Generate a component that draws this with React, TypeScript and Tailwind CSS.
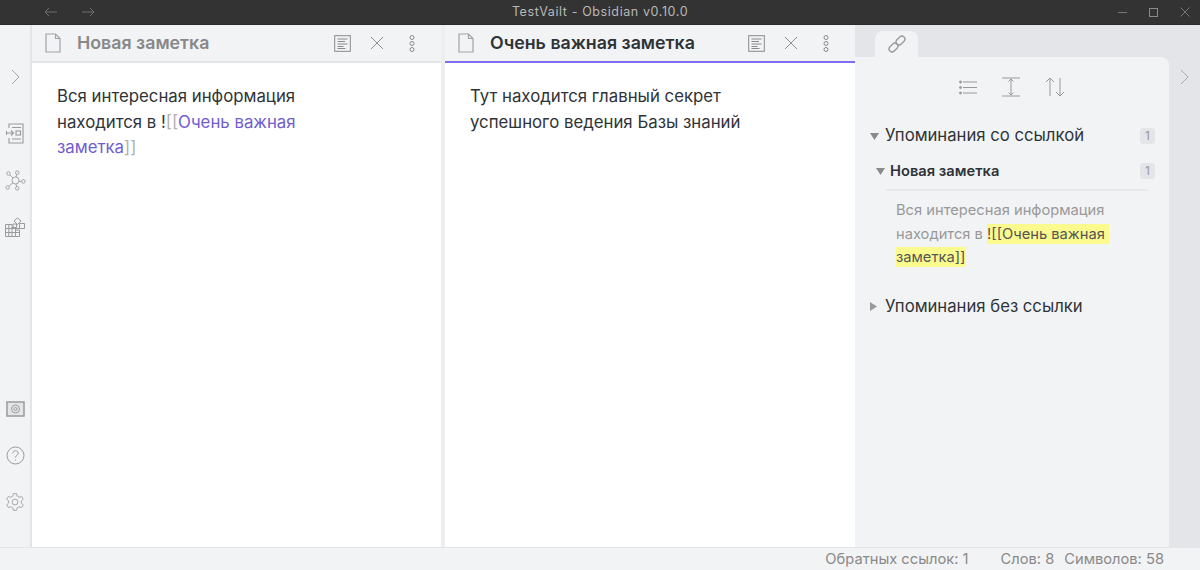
import type { ReactNode } from 'react'

const font = { fontFamily: 'Inter, "Noto Sans", sans-serif' }

function Svg({ size, children, className }: { size: number; children: ReactNode; className?: string }) {
  return (
    <svg width={size} height={size} viewBox="0 0 24 24" fill="none" stroke="currentColor" strokeWidth="1" className={className}>
      {children}
    </svg>
  )
}

function PageIcon() {
  return (
    <svg width="16" height="20" viewBox="0 0 16 20" fill="none" stroke="#a3a3a3" strokeWidth="1.2">
      <path d="M1 1h9.5L15 5.5V19H1z" />
      <path d="M10.5 1v4.5H15" />
    </svg>
  )
}

function PreviewIcon() {
  return (
    <svg width="17" height="17" viewBox="0 0 17 17" fill="none" stroke="#8a8a8a" strokeWidth="1">
      <rect x="0.7" y="0.7" width="15.6" height="15.6" />
      <path d="M3.5 4h10M3.5 6.5h7.5M3.5 9h10M3.5 11.5h6M3.5 13.5h8" />
    </svg>
  )
}

function CloseIcon() {
  return (
    <svg width="14" height="14" viewBox="0 0 14 14" stroke="#909090" strokeWidth="1">
      <path d="M1 1l12 12M13 1L1 13" />
    </svg>
  )
}

function MoreIcon() {
  return (
    <svg width="6" height="17" viewBox="0 0 6 17" fill="none" stroke="#8a8a8a" strokeWidth="1">
      <circle cx="3" cy="2.5" r="2" />
      <circle cx="3" cy="8.5" r="2" />
      <circle cx="3" cy="14.5" r="2" />
    </svg>
  )
}

function Chevron() {
  return (
    <svg width="9" height="16" viewBox="0 0 9 16" fill="none" stroke="#a8a8a8" strokeWidth="1">
      <path d="M1 1l7 7-7 7" />
    </svg>
  )
}

function PaneHeader({ title, active }: { title: string; active?: boolean }) {
  return (
    <div
      className={`flex h-[38px] shrink-0 items-center border-b-2 bg-[#f2f3f5] pl-[13px] ${
        active ? 'border-[#7f6df2]' : 'border-[#e3e5e8]'
      }`}
    >
      <PageIcon />
      <span
        className={`ml-[16px] flex-1 text-[17.800px] font-semibold ${active ? 'text-[#2e3338]' : 'text-[#888888]'}`}
      >
        {title}
      </span>
      <div className="flex items-center">
        <PreviewIcon />
        <div className="ml-[19px]">
          <CloseIcon />
        </div>
        <div className="mr-[26px] ml-[25px]">
          <MoreIcon />
        </div>
      </div>
    </div>
  )
}

function Badge() {
  return (
    <span className="flex h-[16px] w-[15px] items-center justify-center rounded-[3px] bg-[#e3e5e8] text-[12px] text-[#999999]">
      1
    </span>
  )
}

function Caret({ open }: { open?: boolean }) {
  return open ? (
    <svg width="9" height="7" viewBox="0 0 9 7" fill="#8a8a8a">
      <path d="M0 0h9L4.5 7z" />
    </svg>
  ) : (
    <svg width="7" height="9" viewBox="0 0 7 9" fill="#9a9a9a">
      <path d="M0 0l7 4.5L0 9z" />
    </svg>
  )
}

function Ribbon() {
  return (
    <div className="flex w-[32px] shrink-0 flex-col items-center border-r-2 border-[#e3e5e8] bg-[#f2f3f5] pt-[44px] pb-[35px] text-[#9a9a9a]">
      <Chevron />
      <div className="mt-[38px] flex flex-col items-center gap-[26px]">
        <svg width="18" height="21" viewBox="0 0 18 21" fill="none" stroke="currentColor" strokeWidth="1.100">
          <path d="M3 5V1h14v19H3v-5" />
          <path d="M0.500 10h7M5 7.500L7.500 10 5 12.500M0.500 8v4" />
          <rect x="10" y="8" width="4.500" height="4" />
          <path d="M6 4.500h9M6 16h9" />
        </svg>
        <Svg size={21}>
          <circle cx="12" cy="12" r="4" />
          <circle cx="4" cy="4" r="2" />
          <circle cx="14" cy="3" r="2" />
          <circle cx="3" cy="20" r="2" />
          <circle cx="14" cy="21" r="2" />
          <circle cx="21" cy="13" r="2" />
          <path d="M5.500 5.500l3.500 3.500M13.500 5l-1 3M4.500 18.500l4.500-4M13.500 19l-1-3M19 13h-3" />
        </Svg>
        <svg width="20" height="20" viewBox="0 0 20 20" fill="none" stroke="currentColor" strokeWidth="1">
          <path d="M0.500 7.500H7V19.500H0.500zM7 10.500h3.500V19.500H7M10.500 13h4v6.500h-4" />
          <path d="M0.500 11.500h14M0.500 15.500h14" />
          <path d="M3.800 7.500v12" />
          <path d="M9 4L12.500 0.800 16 4l-3.500 3.500zM14.500 6.500h5v5h-5zM8 7h3.500v3.500H8z" />
        </svg>
      </div>
      <div className="mt-auto flex flex-col items-center gap-[27.500px]">
        <svg width="19" height="17" viewBox="0 0 19 17" fill="#e3e5e8" stroke="currentColor" strokeWidth="1.500">
          <rect x="1" y="1" width="17" height="14" />
          <circle cx="9.500" cy="8" r="4" fill="none" strokeWidth="1" />
          <circle cx="9.500" cy="8" r="1.500" fill="none" strokeWidth="1" />
        </svg>
        <svg width="19" height="19" viewBox="0 0 19 19" fill="none" stroke="currentColor" strokeWidth="1">
          <circle cx="9.500" cy="9.500" r="8.500" />
          <path d="M6.800 7.300c0-1.600 1.200-2.600 2.700-2.600s2.700 1 2.700 2.400c0 2.200-2.700 2.200-2.700 4.400" />
          <path d="M9.500 13.500v1" />
        </svg>
        <Svg size={20}>
          <path d="M10 2h4l.6 3 2.400 1.300 2.900-1 2 3.400-2.300 2v2.600l2.300 2-2 3.400-2.900-1-2.400 1.300-.6 3h-4l-.6-3L7 17.700l-2.900 1-2-3.400 2.300-2v-2.600l-2.300-2 2-3.400 2.900 1L9.400 5z" />
          <circle cx="12" cy="12" r="3.500" />
        </Svg>
      </div>
    </div>
  )
}

function TitleBar() {
  return (
    <div className="relative flex h-[25px] shrink-0 items-center border-b border-[#2a2a2a] bg-[#333333] text-[#8a8a8a]">
      <div className="ml-[44px] flex items-center gap-[25px]">
        <svg width="13" height="10" viewBox="0 0 13 10" fill="none" stroke="#6e6e6e" strokeWidth="1">
          <path d="M13 5H1M5 1L1 5l4 4" />
        </svg>
        <svg width="13" height="10" viewBox="0 0 13 10" fill="none" stroke="#6e6e6e" strokeWidth="1">
          <path d="M0 5h12M8 1l4 4-4 4" />
        </svg>
      </div>
      <span className="absolute inset-x-0 text-center text-[12.500px] tracking-[0.6px] text-[#b8b8b8]">
        TestVailt - Obsidian v0.10.0
      </span>
      <div className="ml-auto mr-[10px] flex items-center gap-[22px]">
        <svg width="9" height="9" viewBox="0 0 9 9" stroke="#777777" strokeWidth="1">
          <path d="M0 4.500h9" />
        </svg>
        <svg width="9" height="9" viewBox="0 0 9 9" fill="none" stroke="#8a8a8a" strokeWidth="1">
          <rect x="0.500" y="0.500" width="8" height="8" />
        </svg>
        <svg width="10" height="10" viewBox="0 0 10 10" stroke="#777777" strokeWidth="1">
          <path d="M0.500 0.500l9 9M9.500 0.500l-9 9" />
        </svg>
      </div>
    </div>
  )
}

export default function App() {
  return (
    <div className="flex h-[570px] w-[1200px] flex-col overflow-hidden bg-[#f2f3f5]" style={font}>
      <TitleBar />

      <div className="flex min-h-0 flex-1">
        <Ribbon />

        {/* Left note */}
        <div className="flex w-[409px] shrink-0 flex-col bg-white">
          <PaneHeader title="Новая заметка" />
          <div className="px-[25px] pt-[21px] text-[16.800px] leading-[25.600px] text-[#2e3338]">
            Вся интересная информация
            <br />
            находится в !<span className="text-[#b0b0b0]">[[</span>
            <span className="text-[#705dcf]">Очень важная</span>
            <br />
            <span className="text-[#705dcf]">заметка</span>
            <span className="text-[#b0b0b0]">]]</span>
          </div>
        </div>

        <div className="w-[4px] shrink-0 bg-[#eceef0]" />

        {/* Right note */}
        <div className="flex w-[410px] shrink-0 flex-col bg-white">
          <PaneHeader title="Очень важная заметка" active />
          <div className="px-[25px] pt-[21px] text-[16.800px] leading-[25.600px] text-[#2e3338]">
            Тут находится главный секрет
            <br />
            успешного ведения Базы знаний
          </div>
        </div>

        {/* Backlinks sidebar */}
        <div className="flex min-w-0 flex-1 bg-[#e3e5e8]">
          <div className="flex w-[314px] shrink-0 flex-col">
            <div className="flex h-[32px] shrink-0 items-end pl-[20px]">
              <div className="flex h-[26px] w-[43px] items-center justify-center rounded-t-[8px] bg-[#f2f3f5] text-[#999999]">
                <svg width="18" height="18" viewBox="0 0 18 18" fill="none" stroke="currentColor" strokeWidth="1.300">
                  <rect x="-5" y="-3" width="10" height="6" rx="3" transform="translate(5.500 12.500) rotate(-45)" />
                  <rect x="-5" y="-3" width="10" height="6" rx="3" transform="translate(12.500 5.500) rotate(-45)" />
                </svg>
              </div>
            </div>

            <div className="flex-1 rounded-tr-[8px] bg-[#f2f3f5] pt-[20px] pr-[14px] pl-[15px]">
              <div className="ml-[89px] flex items-center gap-[25px] text-[#999999]">
                <svg width="18" height="15" viewBox="0 0 18 15" fill="none" stroke="currentColor" strokeWidth="1">
                  <path d="M4 2h14M4 7.500h14M4 13h14" />
                  <circle cx="1.500" cy="2" r="1" fill="currentColor" />
                  <circle cx="1.500" cy="7.500" r="1" fill="currentColor" />
                  <circle cx="1.500" cy="13" r="1" fill="currentColor" />
                </svg>
                <svg width="18" height="20" viewBox="0 0 18 20" fill="none" stroke="currentColor" strokeWidth="1">
                  <path d="M0 1h18M0 19h18M9 2v16M6.500 4.500L9 2l2.500 2.500M6.500 15.500L9 18l2.500-2.500" />
                </svg>
                <svg width="20" height="20" viewBox="0 0 20 20" fill="none" stroke="currentColor" strokeWidth="1">
                  <path d="M5 19V1M1 5l4-4 4 4M15 1v18M11 15l4 4 4-4" />
                </svg>
              </div>

              <div className="mt-[27px] flex h-[24px] items-center">
                <Caret open />
                <span className="ml-[6px] flex-1 text-[16.700px] text-[#2e3338]">Упоминания со ссылкой</span>
                <Badge />
              </div>

              <div className="mt-[11px] flex h-[24px] items-center pl-[6px]">
                <Caret open />
                <span className="ml-[5px] flex-1 text-[14.700px] font-semibold text-[#2e3338]">Новая заметка</span>
                <Badge />
              </div>

              <div className="mr-[7px] ml-[16px] mt-[6px] border-t-2 border-[#e8e9ec]" />

              <div className="mt-[8px] pl-[26px] text-[14.700px] leading-[23.500px] text-[#999999]">
                Вся интересная информация
                <br />
                находится в{' '}
                <span className="bg-[#fbfa8f] py-[1px] pr-[4px] text-[#555555]">![[Очень важная</span>
                <br />
                <span className="bg-[#fbfa8f] py-[1px] text-[#555555]">заметка]]</span>
              </div>

              <div className="mt-[25px] flex h-[24px] items-center">
                <Caret />
                <span className="ml-[8px] text-[16.700px] text-[#2e3338]">Упоминания без ссылки</span>
              </div>
            </div>
          </div>

          <div className="flex flex-1 justify-center pt-[44px]">
            <Chevron />
          </div>
        </div>
      </div>

      <div className="flex h-[23px] shrink-0 items-center justify-end border-t border-[#e3e5e8] bg-[#f2f3f5] pr-[36px] text-[14.700px] text-[#8a8a8a]">
        <span>Обратных ссылок: 1</span>
        <span className="ml-[32px]">Слов: 8</span>
        <span className="ml-[10px]">Символов: 58</span>
      </div>
    </div>
  )
}
